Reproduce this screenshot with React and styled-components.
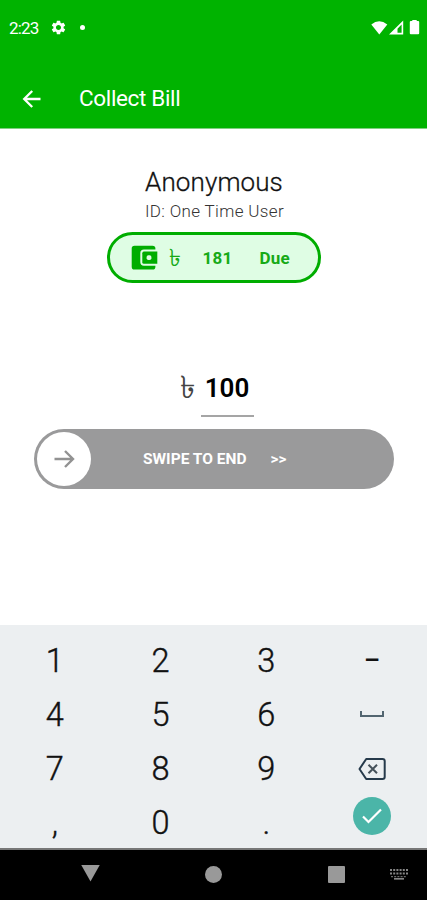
import React from "react";
import styled, { createGlobalStyle } from "styled-components";
import { MdSettings } from "react-icons/md";

const keys = ["1", "2", "3", "–", "4", "5", "6", "space", "7", "8", "9", "delete", ",", "0", ".", "done"];

export default function App() {
  return (
    <>
      <GlobalStyle />
      <Screen>
        <Header>
          <StatusBar>
            <StatusGroup>
              <Clock>2:23</Clock>
              <MdSettings size={17} />
              <Dot />
            </StatusGroup>
            <StatusIcons />
          </StatusBar>
          <Toolbar>
            <BackArrow />
            <Title>Collect Bill</Title>
          </Toolbar>
        </Header>
        <Content>
          <Name>Anonymous</Name>
          <UserId>ID: One Time User</UserId>
          <DuePill>
            <WalletIcon />
            <DueTaka>৳</DueTaka>
            <DueAmount>181</DueAmount>
            <DueLabel>Due</DueLabel>
          </DuePill>
          <AmountRow>
            <AmountTaka>৳</AmountTaka>
            <Amount>100</Amount>
          </AmountRow>
          <Swipe>
            <Knob>
              <KnobArrow />
            </Knob>
            <SwipeText>SWIPE TO END</SwipeText>
            <SwipeText>&gt;&gt;</SwipeText>
          </Swipe>
        </Content>
        <Keypad>
          {keys.map((key) => (
            <Key key={key} $bold={key === "–"}>
              <KeyFace name={key} />
            </Key>
          ))}
        </Keypad>
        <NavBar>
          <NavTriangle />
          <NavCircle />
          <NavSquare />
          <NavKeyboard />
        </NavBar>
      </Screen>
    </>
  );
}

function StatusIcons() {
  return (
    <svg width="50" height="16" viewBox="0 0 50 16" fill="#fff">
      <path d="M.3 4.6Q8.2-2.2 16.3 4.6L8.3 14.5Z" />
      <path d="M18 14.5 32.2.6V14.5ZM26.5 12.8H30.6V4.5L26.5 8.7Z" fillRule="evenodd" />
      <path d="M41.3 1V0H45.7V1H47.2Q48.2 1 48.2 2V13.3Q48.2 14.3 47.2 14.3H39.8Q38.8 14.3 38.8 13.3V2Q38.8 1 39.8 1Z" />
    </svg>
  );
}

function BackArrow() {
  return (
    <svg width="20" height="20" viewBox="0 0 20 20" fill="none" stroke="#fff" strokeWidth="2.3">
      <path d="M18.5 10H3M10.2 2 2.2 10 10.2 18" />
    </svg>
  );
}

function WalletIcon() {
  return (
    <svg width="28" height="26" viewBox="0 0 28 26" fill="#00ad00">
      <path d="M3.5.8H21.5Q24.4.8 24.4 3.6V4.6H13Q9.3 4.6 9.3 8.2V17Q9.3 20.7 13 20.7H24.4V21.7Q24.4 24.6 21.5 24.6H3.5Q.7 24.6.7 21.7V3.6Q.7.8 3.5.8Z" />
      <path d="M12.9 6.6H26.3V18.8H12.9Q11.3 18.8 11.3 17.2V8.2Q11.3 6.6 12.9 6.6Z" />
      <rect x="15.6" y="10.2" width="4.8" height="4.8" rx="1.8" fill="#dffde4" />
    </svg>
  );
}

function KnobArrow() {
  return (
    <svg width="22" height="20" viewBox="0 0 22 20" fill="none" stroke="#929292" strokeWidth="2.4">
      <path d="M1.5 10H20M12 2 20 10 12 18" />
    </svg>
  );
}

function KeyFace({ name }) {
  if (name === "space") {
    return (
      <svg width="26" height="8" viewBox="0 0 26 8" fill="none" stroke="#526570" strokeWidth="2">
        <path d="M2 0V5H24V0" />
      </svg>
    );
  }
  if (name === "delete") {
    return (
      <svg width="28" height="22" viewBox="0 0 28 22" fill="none" stroke="#263a4b" strokeWidth="2">
        <path d="M8.2 1H24.5Q26.7 1 26.7 3V19Q26.7 21 24.5 21H8.2L1.5 11Z" strokeLinejoin="round" />
        <path d="M10.5 6.7 19 15.3M19 6.7 10.5 15.3" stroke="#46525b" />
      </svg>
    );
  }
  if (name === "done") {
    return (
      <Done>
        <svg width="20" height="16" viewBox="0 0 20 16" fill="none" stroke="#fff" strokeWidth="2.2">
          <path d="M1 8.5 6.5 14 19 1.5" />
        </svg>
      </Done>
    );
  }
  return name;
}

function NavKeyboard() {
  return (
    <svg width="20" height="14" viewBox="0 0 20 14" fill="none" stroke="#858585" strokeWidth="2">
      <path d="M1 3H19M1 6.5H19" strokeDasharray="2 1.2" />
      <path d="M2 9.7H18" strokeWidth="1" strokeDasharray="2 1.2" />
      <path d="M5 11.8H15" strokeWidth="1.7" />
    </svg>
  );
}

const GlobalStyle = createGlobalStyle`
  body {
    margin: 0;
    font-family: Roboto, "Liberation Sans", sans-serif;
  }
  svg {
    display: block;
    flex-shrink: 0;
  }
`;
const Screen = styled.div`
  width: 427px;
  height: 900px;
  display: flex;
  flex-direction: column;
  overflow: hidden;
  background: #fff;
`;
const Header = styled.header`
  height: 128px;
  flex-shrink: 0;
  background: #00b300;
  border-bottom: 1px solid #81cf81;
  color: #fff;
`;
const StatusBar = styled.div`
  height: 55px;
  box-sizing: border-box;
  padding: 0 6px 0 9px;
  display: flex;
  align-items: center;
  justify-content: space-between;
`;
const StatusGroup = styled.div`
  display: flex;
  align-items: center;
`;
const Clock = styled.span`
  width: 41px;
  font-size: 17px;
  letter-spacing: -0.8px;
`;
const Dot = styled.span`
  width: 5px;
  height: 5px;
  margin-left: 13px;
  border-radius: 50%;
  background: #fff;
`;
const Toolbar = styled.div`
  height: 73px;
  padding: 14px 0 0 22px;
  box-sizing: border-box;
  display: flex;
  align-items: center;
  gap: 37px;
`;
const Title = styled.h1`
  margin: 0;
  padding-bottom: 1px;
  font-size: 22.5px;
  font-weight: 400;
  line-height: 28px;
  letter-spacing: -0.35px;
`;
const Content = styled.main`
  flex: 1;
  display: flex;
  flex-direction: column;
  align-items: center;
`;
const Name = styled.h2`
  margin: 37px 0 0 1px;
  font-size: 26px;
  font-weight: 300;
  line-height: 32px;
  letter-spacing: 0.1px;
  color: #111;
  -webkit-text-stroke: 0.3px #111;
`;
const UserId = styled.p`
  margin: 3px 0 0 2px;
  font-size: 17px;
  font-weight: 300;
  line-height: 20px;
  letter-spacing: 0.35px;
  color: #333;
`;
const DuePill = styled.div`
  width: 214px;
  height: 51px;
  margin-top: 11px;
  padding-left: 21px;
  box-sizing: border-box;
  display: flex;
  align-items: center;
  border: 3px solid #00ad00;
  border-radius: 26px;
  background: #dffde4;
  color: #16aa16;
  font-size: 17px;
  font-weight: 700;
`;
const DueTaka = styled.span`
  width: 12px;
  margin-left: 10px;
  font-size: 24px;
  font-weight: 300;
  line-height: 28px;
`;
const DueAmount = styled.span`
  width: 57px;
  margin-left: 22px;
  letter-spacing: 0.2px;
`;
const DueLabel = styled.span`
  letter-spacing: 0.2px;
`;
const AmountRow = styled.div`
  margin: 86px 0 0 7px;
  display: flex;
`;
const AmountTaka = styled.span`
  width: 14px;
  margin: 0 7px 0 0;
  color: #444;
  font-size: 31px;
  line-height: 38px;
`;
const Amount = styled.div`
  width: 53px;
  height: 48px;
  margin-right: 1px;
  box-sizing: border-box;
  border-bottom: 2px solid #a5a5a5;
  color: #000;
  font-size: 26px;
  font-weight: 600;
  line-height: 38px;
  text-align: center;
`;
const Swipe = styled.div`
  width: 360px;
  height: 60px;
  margin: 12px 0 0 1px;
  padding-left: 3px;
  box-sizing: border-box;
  display: flex;
  align-items: center;
  border-radius: 30px;
  background: #9a9a9b;
  color: #fff;
`;
const Knob = styled.div`
  width: 54px;
  height: 54px;
  margin-right: 52px;
  display: flex;
  align-items: center;
  justify-content: center;
  border-radius: 50%;
  background: #fff;
`;
const SwipeText = styled.span`
  margin-right: 24px;
  font-size: 15.5px;
  font-weight: 700;
`;
const Keypad = styled.div`
  height: 223px;
  padding: 9px 2px 0;
  box-sizing: border-box;
  display: grid;
  grid-template-columns: repeat(4, 1fr);
  grid-auto-rows: 54px;
  background: #eceff1;
`;
const Key = styled.div`
  display: flex;
  align-items: center;
  justify-content: center;
  color: #111;
  font-size: ${(p) => (p.$bold ? "25px" : "32.5px")};
  font-weight: ${(p) => (p.$bold ? 500 : 300)};
  line-height: 54px;
  -webkit-text-stroke: ${(p) => (p.$bold ? "0" : "0.4px #111")};
`;
const Done = styled.div`
  width: 38px;
  height: 38px;
  margin-bottom: 15px;
  display: flex;
  align-items: center;
  justify-content: center;
  border-radius: 50%;
  background: #4bb5a8;
`;
const NavBar = styled.nav`
  height: 52px;
  padding: 0 18px 2px 81px;
  box-sizing: border-box;
  display: flex;
  align-items: center;
  border-top: 2px solid #777;
  background: #000;
`;
const NavTriangle = styled.span`
  width: 19px;
  height: 17px;
  margin: 0 105px 2px 0;
  background: #999;
  clip-path: polygon(0 0, 100% 0, 50% 100%);
`;
const NavCircle = styled.span`
  width: 17px;
  height: 17px;
  margin-right: 106px;
  border-radius: 50%;
  background: #999;
`;
const NavSquare = styled.span`
  width: 17px;
  height: 17px;
  margin-right: 44px;
  border-radius: 1px;
  background: #999;
`;
